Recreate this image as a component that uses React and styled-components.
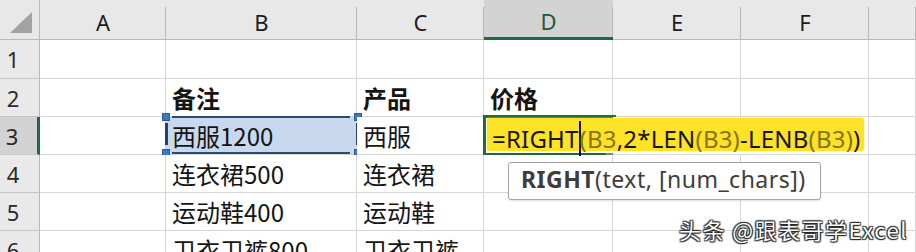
import React from 'react'
import styled, { createGlobalStyle } from 'styled-components'

const GlobalStyle = createGlobalStyle`
  html, body {
    margin: 0;
    padding: 0;
    background: #fff;
    overflow: hidden;
  }
  body {
    font-family: "Noto Sans", "Noto Sans CJK SC", sans-serif;
  }
`

const GRID = '#d6d6d6'
const HEAD_LINE = '#b9b9b9'
const GREEN = '#1e6b3d'

const Sheet = styled.div`
  position: relative;
  width: 916px;
  height: 252px;
  overflow: hidden;
  display: grid;
  grid-template-columns: 40px 126px 191px 127px 129px 128px 128px 1fr;
  grid-template-rows: 40px 39px repeat(5, 38px);
`

const Corner = styled.div`
  background: #e8e8e8;
  border-right: 1px solid ${HEAD_LINE};
  border-bottom: 1px solid ${HEAD_LINE};
  box-sizing: border-box;
  display: flex;
  align-items: flex-end;
  justify-content: flex-end;
  padding: 0 7px 6px 0;
`

const ColHeader = styled.div`
  position: relative;
  box-sizing: border-box;
  display: flex;
  align-items: center;
  justify-content: center;
  padding-top: 5px;
  background: ${(p) => (p.$active ? '#d3d3d3' : '#e8e8e8')};
  border-bottom: ${(p) => (p.$active ? `3px solid ${GREEN}` : `1px solid ${HEAD_LINE}`)};
  color: ${(p) => (p.$active ? '#1d5a34' : '#1c1c1c')};
  font-size: 22px;

  &::after {
    content: '';
    position: absolute;
    right: 0;
    top: 7px;
    bottom: 0;
    width: 1px;
    background: ${HEAD_LINE};
  }
`

const RowHeader = styled.div`
  box-sizing: border-box;
  display: flex;
  align-items: center;
  justify-content: center;
  padding-right: 13px;
  background: ${(p) => (p.$active ? '#d3d3d3' : '#e9e9e9')};
  border-right: ${(p) => (p.$active ? `3px solid ${GREEN}` : `1px solid ${HEAD_LINE}`)};
  border-bottom: 1px solid #c6c6c6;
  color: #2a2a2a;
  font-size: 22px;
`

const Cell = styled.div`
  position: relative;
  box-sizing: border-box;
  display: flex;
  align-items: center;
  padding-left: 6px;
  white-space: nowrap;
  border-right: 1px solid ${(p) => (p.$flow ? 'transparent' : GRID)};
  border-bottom: 1px solid ${GRID};
  background: ${(p) => (p.$range ? '#c8d8ee' : '#fff')};
  font-family: "Noto Sans CJK SC", sans-serif;
  font-size: 24px;
  font-weight: ${(p) => (p.$bold ? 700 : 400)};
  color: #141414;
`

// reference-range outline drawn over B3 while the formula is edited
const RangeOutline = styled.div`
  position: absolute;
  inset: -1px -3px 0 -1px;
  border-top: 2px solid #2d4a6c;
  border-bottom: 2px solid #2d4a6c;
  clip-path: polygon(7px 0, calc(100% - 9px) 0, calc(100% - 9px) 100%, 7px 100%);

  &::before,
  &::after {
    content: '';
    position: absolute;
    top: 5px;
    bottom: 7px;
    width: 3px;
    background: #23406a;
  }
  &::before { left: 0; }
  &::after { right: 0; }
`

const SideBars = styled.div`
  position: absolute;
  inset: 6px -3px 9px -1px;
  border-left: 3px solid #23406a;
  border-right: 3px solid #23406a;
`

const Handle = styled.div`
  position: absolute;
  width: 8px;
  height: 8px;
  background: #3d78c2;
  border: 1px solid #2d5d98;
  box-sizing: border-box;
  ${(p) => (p.$right ? 'right: -6px;' : 'left: -4px;')}
  ${(p) => (p.$bottom ? 'bottom: -3px;' : 'top: -4px;')}
`

const ActiveFrame = styled.div`
  position: absolute;
  left: -1px;
  top: -2px;
  width: 133px;
  height: 41px;
  box-sizing: border-box;
  border: 3px solid ${GREEN};
  border-right: none;

  &::after {
    content: '';
    position: absolute;
    right: -1px;
    bottom: -4px;
    width: 11px;
    height: 4px;
    background: #6e8b78;
  }
`

const Highlight = styled.div`
  position: absolute;
  left: 3px;
  top: 1px;
  height: 33px;
  box-sizing: border-box;
  padding: 3px 4px 0 5px;
  line-height: 33px;
  background: #fde226;
  border-radius: 3px;
  box-shadow: 0 0 2px #fde226;
  font-family: "Noto Sans", sans-serif;
  font-size: 24px;
  letter-spacing: 0.2px;
  color: #151515;
  white-space: nowrap;
  z-index: 2;
`

const Ref = styled.span`
  color: #85741a;
`

const Caret = styled.span`
  display: inline-block;
  width: 2px;
  height: 35px;
  margin: 0 -1px 0 0;
  background: #111;
  vertical-align: -8px;
`

const Tooltip = styled.div`
  position: absolute;
  left: 24px;
  top: 45px;
  width: 313px;
  height: 38px;
  box-sizing: border-box;
  display: flex;
  align-items: center;
  padding: 0 0 5px 12px;
  background: #fff;
  border: 1px solid #a4a4a4;
  border-radius: 3px;
  box-shadow: 0 1px 2px rgba(0, 0, 0, 0.12);
  font-family: "Noto Sans", sans-serif;
  font-size: 23px;
  letter-spacing: 0.5px;
  color: #3d3d3d;
  white-space: nowrap;
  z-index: 3;

  b {
    font-weight: 700;
  }
`

const Watermark = styled.div`
  position: absolute;
  right: 8px;
  top: 217px;
  line-height: 24px;
  font-family: "Noto Sans CJK SC", sans-serif;
  font-size: 22px;
  color: #fff;
  letter-spacing: 1.5px;
  text-shadow: 0 0 1px #111, 1px 1px 1px #2a2a2a, -1px -1px 1px #333, 1px -1px 1px #333, -1px 1px 1px #333;
  z-index: 4;
`

const columns = ['A', 'B', 'C', 'D', 'E', 'F', '']

const rows = [
  { n: 1, cells: [] },
  { n: 2, cells: ['', '备注', '产品', '价格'], bold: true },
  { n: 3, cells: ['', '西服1200', '西服'] },
  { n: 4, cells: ['', '连衣裙500', '连衣裙'] },
  { n: 5, cells: ['', '运动鞋400', '运动鞋'] },
  { n: 6, cells: ['', '卫衣卫裤800', '卫衣卫裤'] },
]

const Triangle = () => (
  <svg width="22" height="21" viewBox="0 0 22 21">
    <polygon points="0,21 22,0 22,21" fill="#a3a3a3" />
  </svg>
)

const RangeBox = () => (
  <>
    <RangeOutline />
    <SideBars />
    <Handle />
    <Handle $right />
    <Handle $bottom />
    <Handle $right $bottom />
  </>
)

const EditingCell = () => (
  <>
    <ActiveFrame />
    <Highlight>
      =RIGHT<Caret />
      <Ref>(B3</Ref>,2*LEN<Ref>(B3)</Ref>-LENB<Ref>(B3)</Ref>)
    </Highlight>
    <Tooltip>
      <b>RIGHT</b>(text, [num_chars])
    </Tooltip>
  </>
)

export default function App() {
  return (
    <>
      <GlobalStyle />
      <Sheet>
        <Corner>
          <Triangle />
        </Corner>
        {columns.map((c, i) => (
          <ColHeader key={i} $active={c === 'D'}>
            {c}
          </ColHeader>
        ))}
        {rows.map((row) => (
          <React.Fragment key={row.n}>
            <RowHeader $active={row.n === 3}>{row.n}</RowHeader>
            {columns.map((c, i) => {
              const isB3 = row.n === 3 && c === 'B'
              const isD3 = row.n === 3 && c === 'D'
              const flow = row.n === 3 && (c === 'D' || c === 'E')
              return (
                <Cell key={i} $bold={row.bold} $range={isB3} $flow={flow}>
                  {row.cells[i] || ''}
                  {isB3 && <RangeBox />}
                  {isD3 && <EditingCell />}
                </Cell>
              )
            })}
          </React.Fragment>
        ))}
        <Watermark>头条 @跟表哥学Excel</Watermark>
      </Sheet>
    </>
  )
}
